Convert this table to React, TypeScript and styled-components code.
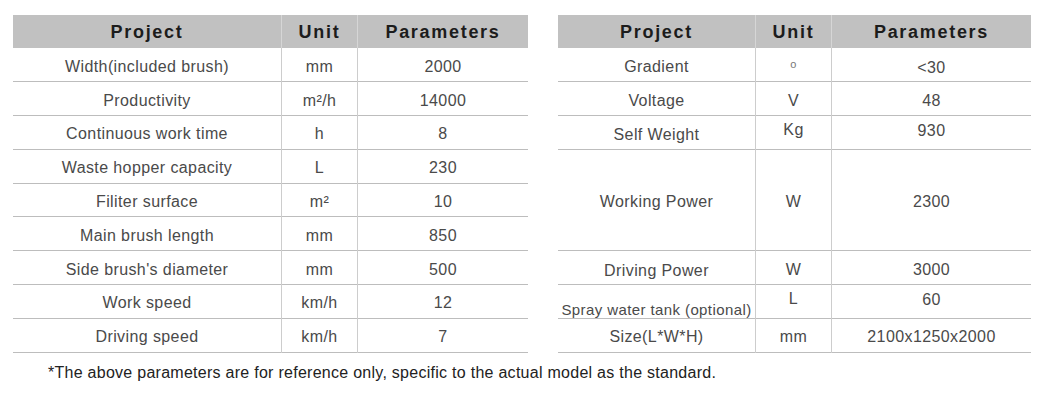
import * as React from "react";
import styled, { createGlobalStyle } from "styled-components";

const GlobalStyle = createGlobalStyle`
  html, body {
    margin: 0;
    padding: 0;
    background: #ffffff;
  }
  body {
    font-family: "Liberation Sans", Arial, sans-serif;
  }
`;

const Page = styled.div`
  width: 1047px;
  height: 413px;
  padding: 15px 0 0 13px;
  box-sizing: border-box;
`;

const Tables = styled.div`
  display: flex;
  gap: 30px;
  align-items: flex-start;
`;

const Table = styled.table<{ $width: number }>`
  width: ${(p) => p.$width}px;
  border-collapse: collapse;
  table-layout: fixed;
`;

const HeadRow = styled.tr`
  height: 33px;
  background: #c1c1c1;
`;

const HeadCell = styled.th<{ $width: number }>`
  width: ${(p) => p.$width}px;
  padding: 2px 0 0;
  font-size: 18px;
  font-weight: 700;
  letter-spacing: 1.7px;
  color: #1c1c1c;
  text-align: center;
  vertical-align: middle;
  border-left: 1px solid #d6d6d6;
  &:first-child {
    border-left: none;
  }
`;

const Row = styled.tr<{ $height?: number }>`
  height: ${(p) => p.$height ?? 33.8}px;
  border-bottom: 1px solid #bdbdbd;
`;

// base offset of 2px down, plus a per-cell nudge where the source is off-centre
const Cell = styled.td<{ $shift?: number; $size?: number }>`
  padding: ${(p) => {
    const s = (p.$shift ?? 0) + 2;
    return s >= 0 ? `${s * 2}px 0 0` : `0 0 ${-s * 2}px`;
  }};
  font-size: ${(p) => p.$size ?? 16}px;
  letter-spacing: 0.4px;
  color: #4a4a4a;
  text-align: center;
  vertical-align: middle;
  white-space: nowrap;
  border-left: 1px solid #cdcdcd;
  &:first-child {
    border-left: none;
  }
`;

const Degree = styled.span`
  font-size: 11px;
  position: relative;
  top: -4px;
  color: #777;
`;

const Note = styled.p`
  margin: 11px 0 0 35px;
  font-size: 16px;
  color: #222;
  letter-spacing: 0.27px;
`;

type Item = {
  name: string;
  unit: React.ReactNode;
  value: string;
  nameShift?: number;
  nameSize?: number;
  unitShift?: number;
  valueShift?: number;
  span?: number;
};

const left: Item[] = [
  { name: "Width(included brush)", unit: "mm", value: "2000" },
  { name: "Productivity", unit: "m²/h", value: "14000" },
  { name: "Continuous work time", unit: "h", value: "8" },
  { name: "Waste hopper capacity", unit: "L", value: "230" },
  { name: "Filiter surface", unit: "m²", value: "10" },
  { name: "Main brush length", unit: "mm", value: "850" },
  { name: "Side brush's diameter", unit: "mm", value: "500" },
  { name: "Work speed", unit: "km/h", value: "12" },
  { name: "Driving speed", unit: "km/h", value: "7" },
];

const right: Item[] = [
  { name: "Gradient", unit: <Degree>o</Degree>, value: "<30", valueShift: 1 },
  { name: "Voltage", unit: "V", value: "48" },
  { name: "Self Weight", unit: "Kg", value: "930", nameShift: 1, unitShift: -4, valueShift: -3 },
  { name: "Working Power", unit: "W", value: "2300", span: 3 },
  { name: "Driving Power", unit: "W", value: "3000", nameShift: 1 },
  {
    name: "Spray water tank (optional)",
    nameSize: 15,
    unit: "L",
    value: "60",
    nameShift: 6,
    unitShift: -5,
    valueShift: -4,
  },
  { name: "Size(L*W*H)", unit: "mm", value: "2100x1250x2000" },
];

function SpecTable({ items, widths }: { items: Item[]; widths: number[] }) {
  const total = widths.reduce((a, b) => a + b, 0) + 2;
  return (
    <Table $width={total}>
      <thead>
        <HeadRow>
          <HeadCell $width={widths[0]}>Project</HeadCell>
          <HeadCell $width={widths[1]}>Unit</HeadCell>
          <HeadCell $width={widths[2]}>Parameters</HeadCell>
        </HeadRow>
      </thead>
      <tbody>
        {items.map((it) => (
          <Row key={it.name} $height={33.8 * (it.span ?? 1)}>
            <Cell $shift={it.nameShift} $size={it.nameSize}>
              {it.name}
            </Cell>
            <Cell $shift={it.unitShift}>{it.unit}</Cell>
            <Cell $shift={it.valueShift}>{it.value}</Cell>
          </Row>
        ))}
      </tbody>
    </Table>
  );
}

export default function App() {
  return (
    <Page>
      <GlobalStyle />
      <Tables>
        <SpecTable items={left} widths={[268, 75, 170]} />
        <SpecTable items={right} widths={[197, 75, 199]} />
      </Tables>
      <Note>
        *The above parameters are for reference only, specific to the actual model as the standard.
      </Note>
    </Page>
  );
}
